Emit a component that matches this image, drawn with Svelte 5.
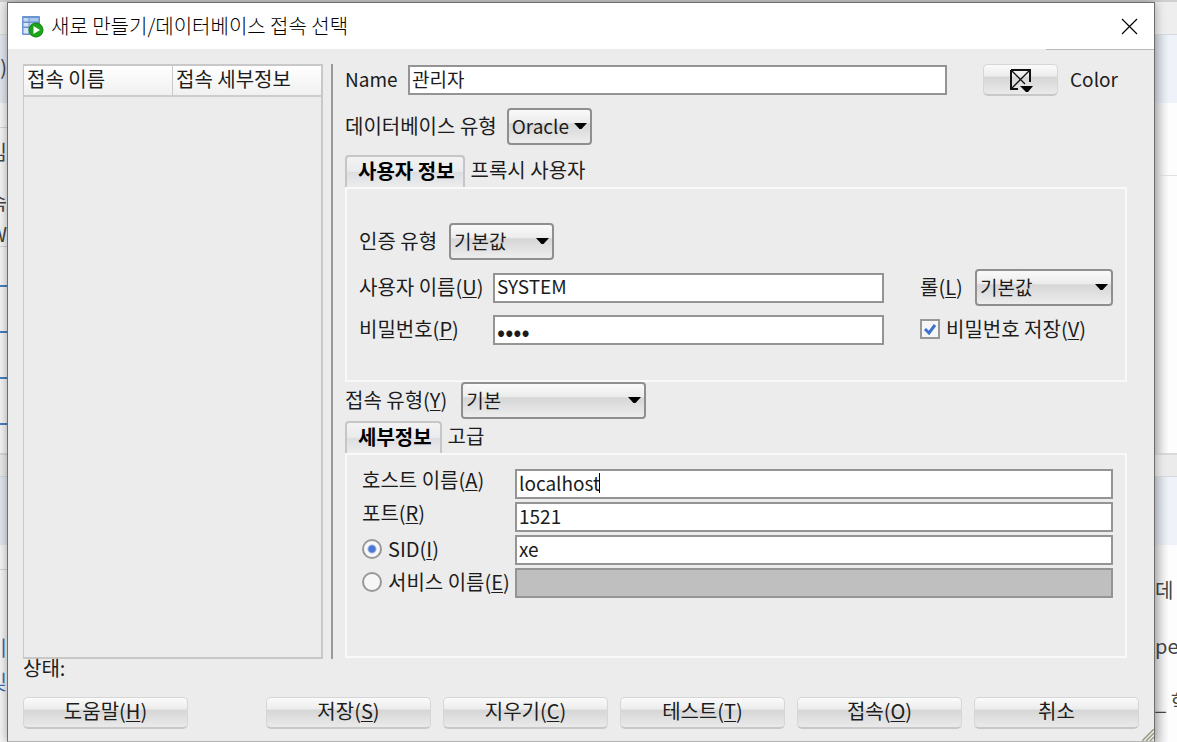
<script>
  let name = $state('관리자');
  let dbType = $state('Oracle');
  let authType = $state('기본값');
  let user = $state('SYSTEM');
  let password = $state('1234');
  let role = $state('기본값');
  let savePassword = $state(true);
  let connType = $state('기본');
  let host = $state('localhost');
  let port = $state('1521');
  let sid = $state('xe');
  let service = $state('');
  let target = $state('sid');

  const actions = [
    { text: '도움말', key: 'H' },
    { text: '저장', key: 'S' },
    { text: '지우기', key: 'C' },
    { text: '테스트', key: 'T' },
    { text: '접속', key: 'O' },
    { text: '취소' }
  ];
</script>

{#snippet arrow()}
  <svg class="arrow" width="13" height="8" viewBox="0 0 13 8"><path d="M0 1h13L7.500 7h-2z" fill="#000" /></svg>
{/snippet}

<div class="desktop">
  <div class="page left" aria-hidden="true">
    <div class="band top"></div>
    <div class="band blue"><span>)</span></div>
    <div class="band gap"></div>
    <div class="band words"><span>임</span><span>속</span><span>W</span></div>
    <div class="band links"><i></i><i></i><i></i><i></i></div>
    <div class="band strip"></div>
    <div class="band blue"></div>
    <div class="band gap"></div>
    <div class="band tail"><span>이</span><span>및</span></div>
  </div>

  <div class="dialog" role="dialog" aria-labelledby="title">
    <header>
      <svg width="23" height="23" viewBox="0 0 23 23">
        <rect x="1" y="1" width="18" height="19" rx="1" fill="#6b93cf" />
        <rect x="2.500" y="3" width="5" height="3.500" fill="#c3d8f3" /><rect x="8.500" y="3" width="9" height="3.500" fill="#a9c8ee" />
        <rect x="2.500" y="8" width="5" height="3.500" fill="#d6e5f8" /><rect x="8.500" y="8" width="9" height="3.500" fill="#bdd4f2" />
        <rect x="2.500" y="13" width="5" height="5.500" fill="#d6e5f8" /><rect x="8.500" y="13" width="9" height="5.500" fill="#bdd4f2" />
        <circle cx="15" cy="15" r="7" fill="#1da51a" stroke="#12800f" />
        <path d="M12.500 11l6.500 4-6.500 4z" fill="#fff" />
      </svg>
      <h1 id="title">새로 만들기/데이터베이스 접속 선택</h1>
      <button class="close" aria-label="닫기">
        <svg width="17" height="17" viewBox="0 0 17 17"><path d="M1 1l15 15M16 1L1 16" stroke="#000" stroke-width="1.200" /></svg>
      </button>
    </header>

    <main>
      <div class="list">
        <table>
          <thead><tr><th>접속 이름</th><th>접속 세부정보</th></tr></thead>
        </table>
      </div>
      <div class="splitter"></div>

      <form onsubmit={(e) => e.preventDefault()}>
        <div class="row name">
          <label for="name">Name</label>
          <input class="field" id="name" bind:value={name} />
          <button type="button" class="btn swatch" id="color" aria-labelledby="color-label">
            <svg width="24" height="24" viewBox="0 0 24 24">
              <path d="M2 2h19v12M2 2v19h7" fill="none" stroke="#111" stroke-width="2" />
              <path d="M2 2l14 14M21 2L2 21" stroke="#111" stroke-width="1.300" />
              <path d="M11 18h13l-5 6h-2z" fill="#000" />
            </svg>
          </button>
          <span id="color-label">Color</span>
        </div>

        <div class="row db">
          <label for="db">데이터베이스 유형</label>
          <span class="select oracle"><select id="db" bind:value={dbType}><option>Oracle</option></select>{@render arrow()}</span>
        </div>

        <div class="tabs" role="tablist">
          <button type="button" role="tab" class="tab active" aria-selected="true">사용자 정보</button>
          <button type="button" role="tab" class="tab" aria-selected="false">프록시 사용자</button>
        </div>
        <section class="panel user">
          <div class="row">
            <label class="auth" for="auth">인증 유형</label>
            <span class="select small"><select id="auth" bind:value={authType}><option>기본값</option></select>{@render arrow()}</span>
          </div>
          <div class="grid">
            <label for="user">사용자 이름(<u>U</u>)</label>
            <input class="field" id="user" bind:value={user} />
            <div class="row role">
              <label for="role">롤(<u>L</u>)</label>
              <span class="select"><select id="role" bind:value={role}><option>기본값</option></select>{@render arrow()}</span>
            </div>
            <label for="password">비밀번호(<u>P</u>)</label>
            <input class="field" id="password" type="password" bind:value={password} />
            <label class="check"><input type="checkbox" bind:checked={savePassword} />비밀번호 저장(<u>V</u>)</label>
          </div>
        </section>

        <div class="row conn">
          <label for="conn">접속 유형(<u>Y</u>)</label>
          <span class="select wide"><select id="conn" bind:value={connType}><option>기본</option></select>{@render arrow()}</span>
        </div>

        <div class="tabs" role="tablist">
          <button type="button" role="tab" class="tab active" aria-selected="true">세부정보</button>
          <button type="button" role="tab" class="tab" aria-selected="false">고급</button>
        </div>
        <section class="panel details">
          <label for="host">호스트 이름(<u>A</u>)</label>
          <div class="host"><input class="field" id="host" bind:value={host} /><span class="caret"></span></div>
          <label for="port">포트(<u>R</u>)</label>
          <input class="field" id="port" bind:value={port} />
          <label class="radio"><input type="radio" name="target" value="sid" bind:group={target} />SID(<u>I</u>)</label>
          <input class="field" aria-label="SID" bind:value={sid} />
          <label class="radio"><input type="radio" name="target" value="service" bind:group={target} />서비스 이름(<u>E</u>)</label>
          <input class="field" aria-label="서비스 이름" disabled={target === 'sid'} bind:value={service} />
        </section>
      </form>
    </main>

    <p class="status">상태:</p>
    <footer>
      {#each actions as action}
        <button class="btn">{action.text}{#if action.key}(<u>{action.key}</u>){/if}</button>
      {/each}
    </footer>
    <svg class="grip" width="12" height="12" viewBox="0 0 12 12"><path d="M0 12L12 0M4 12l8-8M8 12l4-4" stroke="#9a9a80" stroke-width="1.500" /></svg>
  </div>

  <div class="page right" aria-hidden="true">
    <div class="band top"></div>
    <div class="band blue"></div>
    <div class="band white"></div>
    <div class="band plain"></div>
    <div class="band strip"></div>
    <div class="band blue"></div>
    <div class="band copy"><span>데</span><span>per</span><span>_ 학</span></div>
  </div>
</div>

<style>
  :global(body) {
    margin: 0;
    background: #fff;
    overflow: hidden;
  }
  .desktop {
    display: flex;
    min-height: 100vh;
    box-sizing: border-box;
    padding-top: 2px;
    background: linear-gradient(#cfcfcf 2px, transparent 2px);
    font: 20px/28px 'Noto Sans CJK KR', sans-serif;
    color: #1c1c1c;
  }
  input, select, button {
    font: inherit;
    color: inherit;
    margin: 0;
    box-sizing: border-box;
  }
  u {
    text-decoration-thickness: 1px;
    text-underline-offset: 2px;
  }

  /* page behind the dialog */
  .page {
    display: flex;
    flex-direction: column;
    overflow: hidden;
    color: #444;
    white-space: nowrap;
  }
  .left { width: 7px; background: #f6f6f6; }
  .right { width: 22px; background: linear-gradient(90deg, #d8d8d8, #fdfdfd 14px); }
  .band {
    flex: none;
    box-sizing: border-box;
    display: flex;
    flex-direction: column;
  }
  .left .band { align-items: flex-end; }
  .top { height: 33px; background: #eeeeee; border-bottom: 1px solid #d5d8dc; }
  .blue { height: 68px; background: #e3e8ef; padding-top: 18px; }
  .right .blue { background: linear-gradient(90deg, #cfd5dc, #eff3f9 14px); }
  .gap { height: 25px; border-bottom: 1px solid #d5d8dc; }
  .words { height: 119px; border-bottom: 1px solid #d5d8dc; padding-top: 10px; gap: 22px; }
  .words span:last-child { margin-top: -18px; }
  .links { height: 206px; padding-top: 38px; gap: 44px; }
  .links i { width: 7px; height: 2px; background: #4a7fbd; }
  .strip { height: 24px; background: #ebebeb; border-top: 2px solid #d9d9d9; border-bottom: 1px solid #d5d8dc; }
  .tail { padding-top: 64px; gap: 6px; color: #3a6fb0; }
  .white { height: 73px; border-bottom: 1px solid #dde1e6; }
  .plain { height: 277px; }
  .copy { padding-top: 31px; gap: 28px; }

  .dialog {
    position: relative;
    flex: 1;
    min-width: 0;
    display: flex;
    flex-direction: column;
    box-sizing: border-box;
    border: 1px solid #6e6e6e;
    border-bottom-color: #b5b5b5;
    background: #ececec;
    box-shadow: 0 0 10px rgba(0, 0, 0, 0.35);
  }
  header {
    position: relative;
    display: flex;
    align-items: center;
    gap: 7px;
    height: 46px;
    padding: 0 16px 0 13px;
    background: #fff;
    color: #000;
  }
  header::after {
    content: '';
    position: absolute;
    right: 0;
    bottom: -1px;
    width: 108px;
    height: 1px;
    background: #b8b8b8;
  }
  h1 {
    flex: 1;
    margin: 0;
    font-size: 20px;
    font-weight: 300;
  }
  .close {
    display: flex;
    padding: 0;
    border: 0;
    background: none;
  }

  main {
    flex: 1;
    display: grid;
    grid-template-columns: 300px 2px 1fr;
    padding: 15px 27px 0 15px;
  }
  .list {
    border: 2px solid #c8c8c8;
    border-left-width: 1px;
  }
  table {
    width: 100%;
    border-collapse: collapse;
    table-layout: fixed;
  }
  th {
    height: 30px;
    box-sizing: border-box;
    padding: 0 0 4px 3px;
    border-bottom: 2px solid #cdcdcd;
    background: linear-gradient(#fff, #f0f0f0);
    font-weight: 400;
    line-height: 24px;
    text-align: left;
  }
  th + th { border-left: 1px solid #c9c9c9; }
  .splitter {
    background: #9a9a9a;
    margin-left: 8px;
    width: 2px;
  }
  form {
    min-width: 0;
    padding-left: 20px;
  }

  .row {
    display: flex;
    align-items: center;
  }
  label { padding-bottom: 2px; }
  .field {
    display: block;
    width: 100%;
    min-width: 0;
    height: 30px;
    padding: 0 2px 4px;
    border: 2px solid #949494;
    border-radius: 0;
    background: #fff;
    outline: none;
    font-size: 19px;
  }
  .field:disabled { background: #bfbfbf; }
  .field[type='password'] {
    padding-bottom: 0;
    font-size: 24px;
  }
  .name {
    height: 32px;
    font-size: 19px;
  }
  .name label { width: 63px; flex: none; }
  .name .field { flex: 1; }
  .btn {
    height: 32px;
    padding: 0 0 4px;
    border: 1px solid #d6d6d6;
    border-bottom: 2px solid #c8c8c8;
    border-radius: 5px;
    background: linear-gradient(#fbfbfb, #ececec 38%, #d6d6d6 42%, #eaeaea);
    line-height: 24px;
  }
  .swatch {
    flex: none;
    display: flex;
    align-items: center;
    justify-content: center;
    width: 75px;
    margin: 0 12px 0 36px;
    padding: 0;
  }
  #color-label {
    width: 57px;
    padding-bottom: 2px;
  }

  .select {
    position: relative;
    display: block;
  }
  select {
    appearance: none;
    display: block;
    width: 100%;
    height: 37px;
    padding: 0 0 2px 3px;
    border: 2px solid #8f8f8f;
    border-radius: 4px;
    background: linear-gradient(#fafafa, #ececec 38%, #d6d6d6 42%, #ededed);
    font-size: 19px;
  }
  .arrow {
    position: absolute;
    right: 5px;
    top: 14px;
    pointer-events: none;
  }
  .db { gap: 10px; margin-top: 12px; }
  .oracle { width: 85px; }
  .small { width: 105px; }
  .wide { width: 185px; }

  .tabs {
    display: flex;
    height: 32px;
  }
  .db + .tabs { margin-top: 10px; }
  .tab {
    padding: 0 6px 2px;
    border: 0;
    background: none;
    line-height: 28px;
  }
  .active {
    padding: 0 8px 2px 11px;
    border: 2px solid #c6c6c6;
    border-bottom: 0;
    border-radius: 4px 4px 0 0;
    background: linear-gradient(#f2f2f2, #eaebed 48%, #dcdee2 50%, #ececec);
    color: #000;
    font-weight: 700;
  }
  .panel {
    border: 2px solid #f9f9f9;
    box-sizing: border-box;
  }
  .user {
    height: 195px;
    padding: 34px 12px 0;
  }
  .auth { width: 90px; }
  .grid {
    display: grid;
    grid-template-columns: 134px 1fr 193px;
    align-items: center;
    margin-top: 9px;
    row-gap: 9px;
  }
  .grid > .field { width: calc(100% - 36px); }
  .role { justify-content: space-between; }
  .role .select { width: 138px; }
  .check {
    display: flex;
    align-items: center;
  }
  input[type='checkbox'], input[type='radio'] {
    appearance: none;
    flex: none;
    width: 20px;
    height: 20px;
    margin-right: 6px;
    border: 2px solid #989898;
    background: #f6f6f6;
  }
  input[type='checkbox']:checked {
    background: #f6f6f6 url("data:image/svg+xml,%3Csvg xmlns='http://www.w3.org/2000/svg' viewBox='0 0 16 16'%3E%3Cpath d='M3 8l4 4 6-8' fill='none' stroke='%233c72cf' stroke-width='3'/%3E%3C/svg%3E");
  }
  input[type='radio'] { border-radius: 50%; }
  input[type='radio']:checked {
    background: radial-gradient(circle, #4a78d4 3px, #f8f8f8 5px);
  }

  .conn { gap: 14px; }
  .conn + .tabs { margin-top: 2px; }
  .details {
    display: grid;
    grid-template-columns: 153px 1fr;
    grid-auto-rows: 30px;
    gap: 3px 0;
    height: 205px;
    padding: 14px 12px 0 15px;
  }
  .details label {
    line-height: 22px;
    white-space: nowrap;
  }
  .details .radio {
    display: flex;
    align-items: center;
    padding-bottom: 2px;
  }
  .host { position: relative; }
  .caret {
    position: absolute;
    left: 84px;
    top: 4px;
    width: 1px;
    height: 20px;
    background: #000;
  }

  .status {
    margin: 0;
    padding-left: 15px;
    line-height: 18px;
  }
  footer {
    display: grid;
    grid-template-columns: 1fr 54px repeat(5, 1fr);
    column-gap: 12px;
    padding: 20px 15px 12px;
  }
  footer .btn:nth-child(2) { grid-column: 3; }
  .grip {
    position: absolute;
    right: 0;
    bottom: 0;
  }
</style>
